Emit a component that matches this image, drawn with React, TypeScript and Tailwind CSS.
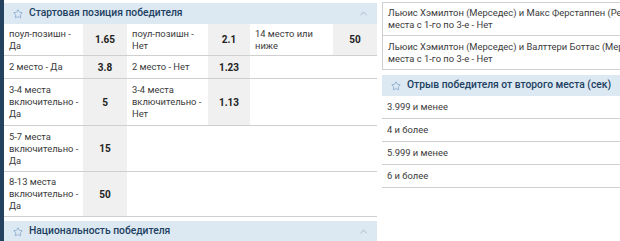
import React from "react";
import { ChevronUp, Star } from "lucide-react";

type Cell = { label: string; odd: string } | null;

const rows: { h: string; cells: Cell[] }[] = [
  {
    h: "h-[32px]",
    cells: [
      { label: "поул-позишн - Да", odd: "1.65" },
      { label: "поул-позишн - Нет", odd: "2.1" },
      { label: "14 место или ниже", odd: "50" },
    ],
  },
  {
    h: "h-[23px]",
    cells: [
      { label: "2 место - Да", odd: "3.8" },
      { label: "2 место - Нет", odd: "1.23" },
      null,
    ],
  },
  {
    h: "h-[47px]",
    cells: [
      { label: "3-4 места включительно - Да", odd: "5" },
      { label: "3-4 места включительно - Нет", odd: "1.13" },
      null,
    ],
  },
  {
    h: "h-[46px]",
    cells: [{ label: "5-7 места включительно - Да", odd: "15" }, null, null],
  },
  {
    h: "h-[45px]",
    cells: [{ label: "8-13 места включительно - Да", odd: "50" }, null, null],
  },
];

const labelW = ["w-[79px]", "w-[81px]", "w-[83px]"];
const oddW = ["w-[44px]", "w-[42px]", "w-[44px]"];

const gaps = ["3.999 и менее", "4 и более", "5.999 и менее", "6 и более"];

const Header = ({ title, chevron }: { title: string; chevron?: boolean }) => (
  <div className="flex h-[21px] items-center bg-[#dce8f2] pl-[9px] pr-[8px] text-[10.3px] font-medium text-[#213f61]">
    <Star size={10} strokeWidth={1.5} className="mr-[6px] text-[#6f97c4]" />
    <span className="leading-none">{title}</span>
    {chevron && <ChevronUp size={11} strokeWidth={1.5} className="ml-auto text-[#8ea3b7]" />}
  </div>
);

export default function App() {
  return (
    <div
      className="flex h-[241px] w-[620px] overflow-hidden bg-white text-[9.4px] text-[#3a3a3a]"
      style={{ fontFamily: "Roboto, 'Liberation Sans', sans-serif" }}
    >
      <div className="w-[4px] shrink-0 bg-[#24415f]" />
      <div className="w-[373px] shrink-0 pt-[3px]">
        <Header title="Стартовая позиция победителя" chevron />
        {rows.map((row, i) => (
          <div key={i} className={`flex ${row.h} border-b border-[#cfcfcf]`}>
            {row.cells.map((c, j) => (
              <React.Fragment key={j}>
                <div className={`${labelW[j]} flex items-center pl-[5px] pr-[4px] leading-[12px]`}>
                  {c?.label}
                </div>
                <div
                  className={`${oddW[j]} flex items-center justify-center text-[10px] font-bold text-[#222] ${
                    c || j === 0 ? "bg-[#f0f0f0]" : ""
                  }`}
                >
                  {c?.odd}
                </div>
              </React.Fragment>
            ))}
          </div>
        ))}
        <div className="mt-[4px]">
          <Header title="Национальность победителя" chevron />
        </div>
      </div>
      <div className="ml-[5px] w-[300px] shrink-0 pt-[2px]">
        <div className="flex h-[34px] flex-col justify-center whitespace-nowrap border border-[#d0d0d0] border-r-0 pl-[5px] leading-[12px]">
          <div>Льюис Хэмилтон (Мерседес) и Макс Ферстаппен (Ред Булл)</div>
          <div>места с 1-го по 3-е - Нет</div>
        </div>
        <div className="flex h-[34px] flex-col justify-center whitespace-nowrap border-b border-l border-[#d0d0d0] pl-[5px] leading-[12px]">
          <div>Льюис Хэмилтон (Мерседес) и Валттери Боттас (Мерседес)</div>
          <div>места с 1-го по 3-е - Нет</div>
        </div>
        <div className="mt-[5px]">
          <Header title="Отрыв победителя от второго места (сек)" />
        </div>
        {gaps.map((g) => (
          <div key={g} className="flex h-[23px] items-center border-b border-[#cfcfcf] pl-[5px]">
            {g}
          </div>
        ))}
      </div>
    </div>
  );
}
